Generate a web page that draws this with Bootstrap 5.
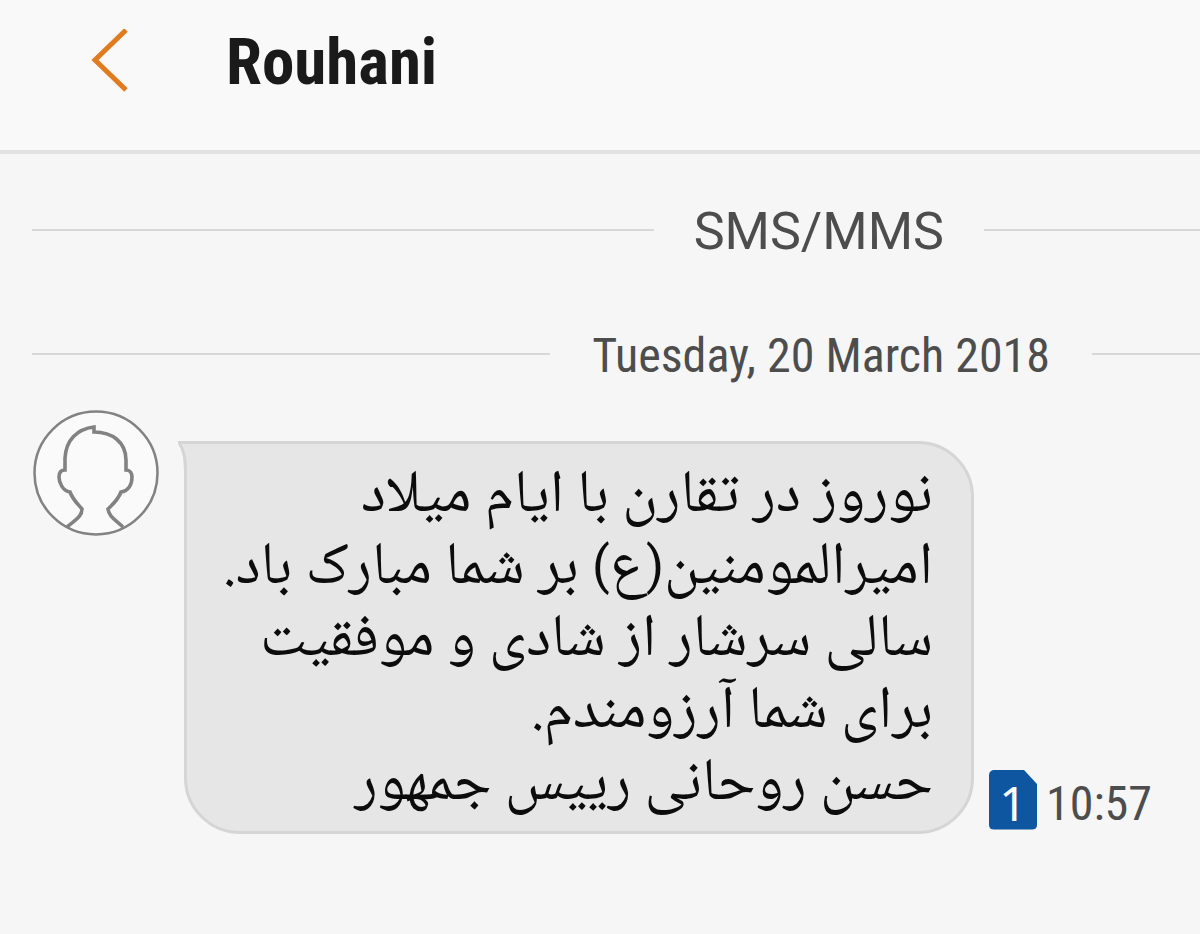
<!DOCTYPE html>
<html lang="en">
<head>
<meta charset="utf-8">
<meta name="viewport" content="width=device-width, initial-scale=1">
<title>Rouhani</title>
<link href="https://cdn.jsdelivr.net/npm/bootstrap@5.3.0/dist/css/bootstrap.min.css" rel="stylesheet">
<style>
  body { background: #f6f6f6; color: #4d4d4d; font-family: "Roboto Condensed", Roboto, "Liberation Sans", sans-serif; }
  .topbar { background: #f9f9f9; border-bottom: 4px solid #e2e2e2; padding: 20px 32px 48px 84px; gap: 82px; }
  .back { width: 60px; line-height: 0; }
  .title { color: #1a1a1a; font-size: 65px; line-height: 80px; padding-top: 2px; }
  .divider { gap: 40px; padding-left: 32px; line-height: 60px; }
  .divider::before, .divider::after { content: ""; height: 2px; background: #d8d8d8; position: relative; top: -2px; }
  .divider::before { flex: 1; }
  .divider::after { width: 18vw; }
  .divider-type { font-family: Roboto, "Liberation Sans", sans-serif; font-size: 52px; margin-top: 48px; }
  .divider-date { gap: 42px; font-size: 48px; margin-top: 64px; }
  .divider-date::after { width: 9vw; }
  .message { padding: 24px 48px 0 32px; }
  .bubble { position: relative; margin: 31px 0 0 24px; padding: 18px 38px 9px 24px; width: 790px; max-width: 100%;
    background: #e6e6e6; border: 3px solid #d5d5d5; border-radius: 0 56px 56px 56px;
    color: #0c0c0c; font-family: "Noto Naskh Arabic", "DejaVu Sans", serif; font-size: 60px; line-height: 72px; }
  .paren { font-family: Roboto, "Liberation Sans", sans-serif; font-size: 52px; line-height: 60px; }
  .tail { position: absolute; left: -9px; top: -3px; }
  .stamp { gap: 9px; margin-left: 15px; font-size: 48px; line-height: 60px; padding-bottom: 3px; }
  .stamp time { padding-top: 6px; margin-bottom: -3px; }
  .sim { width: 48px; height: 60px; background: #0e57a0; color: #fff; border-radius: 5px; line-height: 66px;
    font-family: "Noto Sans", sans-serif; font-size: 48px; clip-path: polygon(0 0, 72% 0, 100% 24%, 100% 100%, 0 100%); }
</style>
</head>
<body>
<header class="topbar d-flex align-items-center">
  <button class="back btn p-0 border-0 text-start" type="button" aria-label="Back">
    <svg width="52" height="64" viewBox="0 0 52 64" fill="none" stroke="#e07b20" stroke-width="5"><path d="M42 1 11 31l31 30"/></svg>
  </button>
  <h1 class="title fw-bold m-0">Rouhani</h1>
</header>
<main>
  <div class="divider divider-type d-flex align-items-center">SMS/MMS</div>
  <div class="divider divider-date d-flex align-items-center">Tuesday, 20 March 2018</div>
  <article class="message d-flex align-items-start">
    <svg class="flex-shrink-0" width="128" height="128" viewBox="0 0 128 128" fill="none" stroke="#828282" role="img" aria-label="Contact">
      <circle cx="64" cy="63" r="61.500" fill="#fafafa" stroke-width="2.500"/>
      <path stroke-width="3.600" d="M35 117c8-7 15-10 15-18-5-6-9-9-12-17-7-1-11-9-11-15 0-4 1-7 6-7V48C34 30 45 19 62 17v5c18 0 32 10 32 28v10c4 0 6 3 6 7 0 8-4 14-11 15-3 8-7 11-13 17 1 8 8 11 15 18"/>
    </svg>
    <div class="bubble" dir="rtl" lang="fa">
      <svg class="tail" width="12" height="32" viewBox="0 0 12 32" fill="#e6e6e6"><path d="M0 0h12v32H6C6 17 5 8 0 1z"/><path d="M12 1.500H1C6 9 7.500 17 7.500 32" fill="none" stroke="#d5d5d5" stroke-width="3"/></svg>
      <div>نوروز در تقارن با ایام میلاد</div>
      <div>امیرالمومنین<span class="paren">(</span>ع<span class="paren">)</span> بر شما مبارک باد.</div>
      <div>سالی سرشار از شادی و موفقیت</div>
      <div>برای شما آرزومندم.</div>
      <div>حسن روحانی رییس جمهور</div>
    </div>
    <div class="stamp d-flex align-items-center align-self-end">
      <span class="sim text-center">1</span>
      <time datetime="10:57">10:57</time>
    </div>
  </article>
</main>
<script src="https://cdn.jsdelivr.net/npm/bootstrap@5.3.0/dist/js/bootstrap.bundle.min.js"></script>
</body>
</html>
